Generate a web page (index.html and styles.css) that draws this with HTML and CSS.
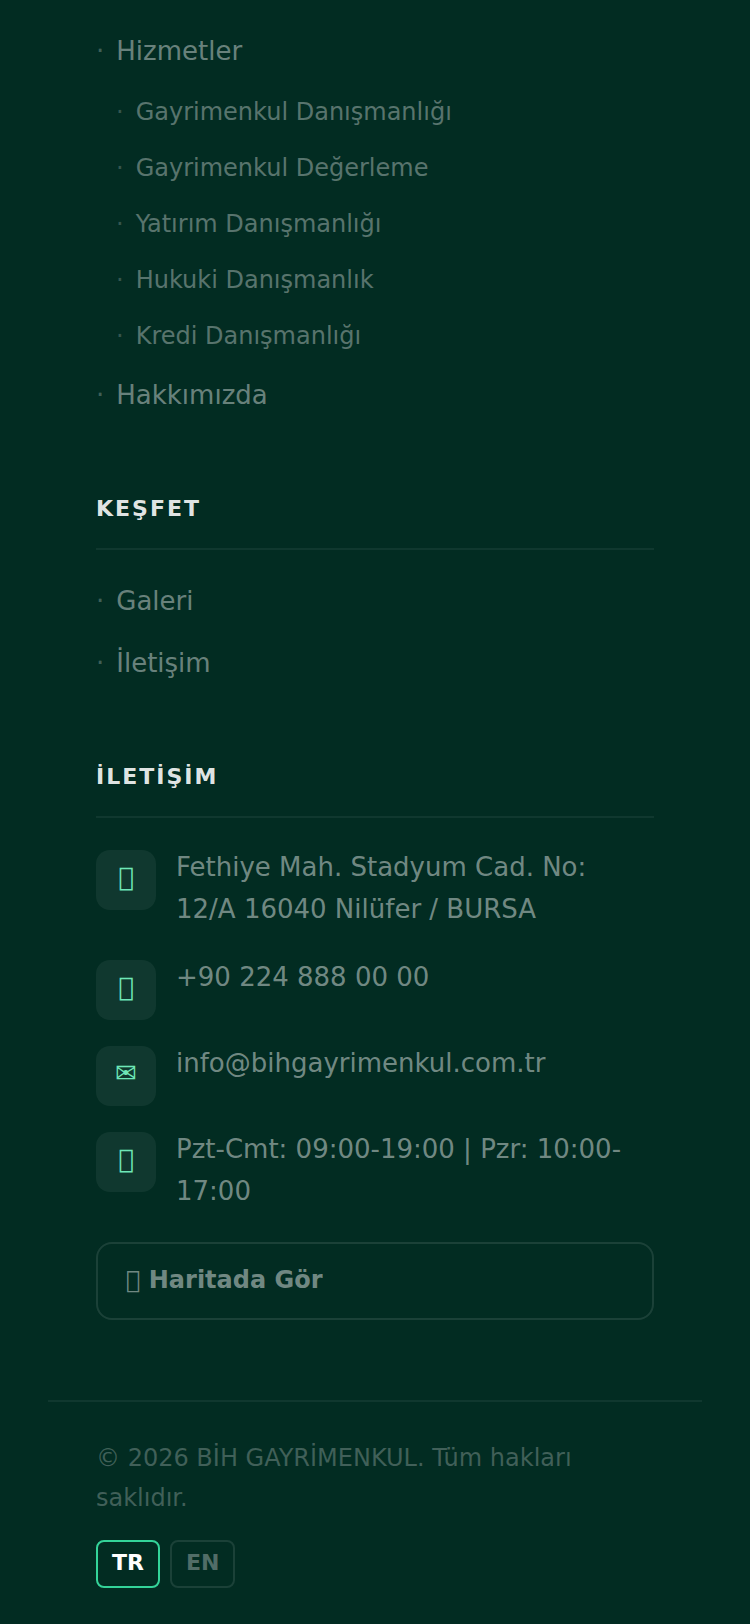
FILE: index.html
```
<!DOCTYPE html>
<html lang="tr">

<head>
    <meta charset="UTF-8">
    <meta name="viewport" content="width=device-width, initial-scale=1.0">
    <title>BİH GAYRİMENKUL</title>
    <link rel="stylesheet" href="styles.css">
</head>

<body>
    <footer class="footer">
        <div class="footer-columns">
            <nav class="footer-nav">
                <ul class="footer-links">
                    <li>
                        <a href="#hizmetler">Hizmetler</a>
                        <ul class="footer-sublinks">
                            <li><a href="#danismanlik">Gayrimenkul Danışmanlığı</a></li>
                            <li><a href="#degerleme">Gayrimenkul Değerleme</a></li>
                            <li><a href="#yatirim">Yatırım Danışmanlığı</a></li>
                            <li><a href="#hukuki">Hukuki Danışmanlık</a></li>
                            <li><a href="#kredi">Kredi Danışmanlığı</a></li>
                        </ul>
                    </li>
                    <li><a href="#hakkimizda">Hakkımızda</a></li>
                </ul>
            </nav>

            <nav class="footer-nav">
                <h2 class="footer-title">KEŞFET</h2>
                <ul class="footer-links">
                    <li><a href="#galeri">Galeri</a></li>
                    <li><a href="#iletisim">İletişim</a></li>
                </ul>
            </nav>

            <section id="iletisim">
                <h2 class="footer-title">İLETİŞİM</h2>
                <ul class="contact-list">
                    <li>
                        <span class="contact-icon">&#xf3c5;</span>
                        <span class="contact-text">Fethiye Mah. Stadyum Cad. No: 12/A 16040 Nilüfer / BURSA</span>
                    </li>
                    <li>
                        <span class="contact-icon">&#xf095;</span>
                        <a class="contact-text" href="tel:+902248880000">+90 224 888 00 00</a>
                    </li>
                    <li>
                        <span class="contact-icon">✉</span>
                        <a class="contact-text" href="mailto:info@bihgayrimenkul.com.tr">info@bihgayrimenkul.com.tr</a>
                    </li>
                    <li>
                        <span class="contact-icon">&#xf017;</span>
                        <span class="contact-text">Pzt-Cmt: 09:00-19:00 | Pzr: 10:00-17:00</span>
                    </li>
                </ul>
                <a class="map-link" href="#harita"><span class="map-icon">&#xf3c5;</span> Haritada Gör</a>
            </section>
        </div>

        <div class="footer-bottom">
            <p class="copyright">© 2026 BİH GAYRİMENKUL. Tüm hakları saklıdır.</p>
            <div class="languages">
                <button type="button" class="lang active">TR</button>
                <button type="button" class="lang">EN</button>
            </div>
        </div>
    </footer>
</body>

</html>
```
FILE: styles.css
```
* {
    box-sizing: border-box;
}

body {
    background-color: #022c22;
    color: #ffffff;
    font-family: "DejaVu Sans", sans-serif;
    font-size: 26px;
    margin: 0;
}

a {
    color: inherit;
    text-decoration: none;
}

ul {
    list-style: none;
    margin: 0;
    padding: 0;
}

.footer {
    padding: 20px 48px 36px;
}

.footer-columns {
    display: flex;
    flex-direction: column;
    gap: 64px;
    padding: 0 48px 80px;
}

/* Link lists */
.footer-links {
    color: rgba(255, 255, 255, 0.42);
    line-height: 62px;
}

.footer-links a {
    display: flex;
    gap: 12px;
}

.footer-links a::before {
    content: "·";
    opacity: 0.6;
}

.footer-sublinks {
    color: rgba(255, 255, 255, 0.35);
    font-size: 24px;
    line-height: 56px;
    padding: 2px 0 0 20px;
}

.footer-title {
    border-bottom: 2px solid rgba(255, 255, 255, 0.06);
    color: rgba(255, 255, 255, 0.9);
    font-size: 22px;
    letter-spacing: 2px;
    line-height: 38px;
    margin: 0 0 20px;
    padding-bottom: 20px;
}

/* Contact */
.contact-list {
    display: flex;
    flex-direction: column;
    gap: 26px;
    margin: 32px 0 26px;
}

.contact-list li {
    display: flex;
    gap: 20px;
}

.contact-icon {
    background-color: rgba(255, 255, 255, 0.06);
    border-radius: 14px;
    color: #6ee7b7;
    flex: none;
    font-size: 26px;
    height: 60px;
    line-height: 54px;
    text-align: center;
    width: 60px;
}

.contact-text {
    color: rgba(255, 255, 255, 0.45);
    line-height: 42px;
    margin: -4px 0 4px;
}

.map-link {
    border: 2px solid rgba(255, 255, 255, 0.1);
    border-radius: 16px;
    color: rgba(255, 255, 255, 0.45);
    display: block;
    font-size: 24px;
    font-weight: bold;
    line-height: 40px;
    padding: 16px 28px 18px;
}

.map-icon {
    font-weight: normal;
}

/* Bottom bar */
.footer-bottom {
    border-top: 2px solid rgba(255, 255, 255, 0.06);
    padding: 36px 48px 0;
}

.copyright {
    color: rgba(255, 255, 255, 0.25);
    font-size: 24px;
    line-height: 40px;
    margin: 0 0 22px;
}

.languages {
    display: flex;
    gap: 10px;
}

.lang {
    background: none;
    border: 2px solid rgba(255, 255, 255, 0.1);
    border-radius: 8px;
    color: rgba(255, 255, 255, 0.32);
    cursor: pointer;
    font-family: inherit;
    font-size: 22px;
    font-weight: bold;
    height: 48px;
    padding: 0 14px 4px;
}

.lang.active {
    border-color: #34d399;
    color: #ffffff;
}
```
